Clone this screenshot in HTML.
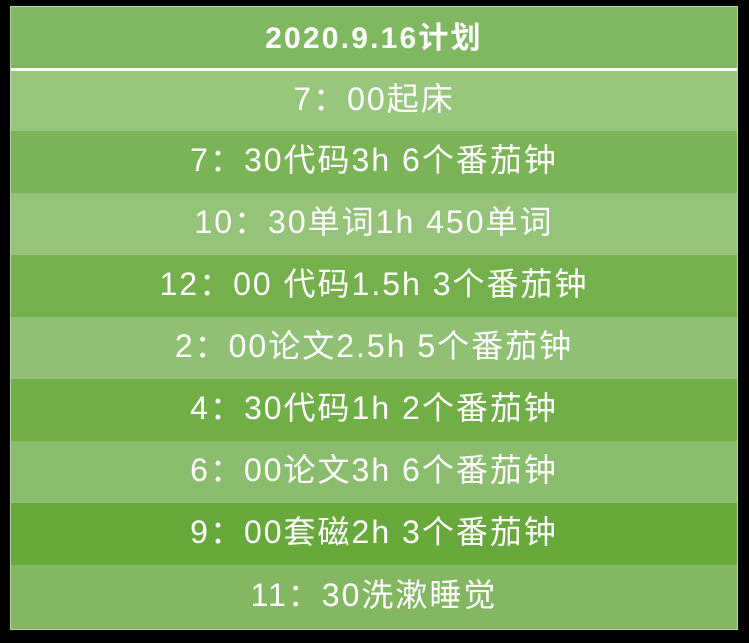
<!DOCTYPE html>
<html><head><meta charset="utf-8"><style>
html,body{margin:0;padding:0;background:#000;width:749px;height:643px;overflow:hidden}
.t{position:absolute;left:10px;top:6px;width:726px;height:622px;border:1px solid #b8d5a8;background:#80b761}
.r{position:absolute;left:0;width:726px;text-align:center;color:#fff;font-family:"Liberation Sans","Noto Sans CJK SC",sans-serif;font-size:32px;line-height:40px;letter-spacing:2px;display:flex;align-items:center;justify-content:center;box-sizing:border-box;padding-bottom:5px}
.h{top:0;height:61px;font-weight:bold;font-size:30px;letter-spacing:2.2px;background:#80b761;padding-bottom:0;padding-top:2px}
.line{position:absolute;left:0;top:61px;width:726px;height:3px;background:#fff}
</style></head><body>
<div class="t">
<div class="r h">2020.9.16计划</div>
<div class="line"></div>
<div class="r" style="top:64px;height:60px;background:#98c67c">7：00起床</div>
<div class="r" style="top:124px;height:62px;background:#7bb456">7：30代码3h 6个番茄钟</div>
<div class="r" style="top:186px;height:62px;background:#94c379">10：30单词1h 450单词</div>
<div class="r" style="top:248px;height:62px;background:#74b04b">12：00 代码1.5h 3个番茄钟</div>
<div class="r" style="top:310px;height:62px;background:#8fc073">2：00论文2.5h 5个番茄钟</div>
<div class="r" style="top:372px;height:62px;background:#70ae46">4：30代码1h 2个番茄钟</div>
<div class="r" style="top:434px;height:62px;background:#8abd6d">6：00论文3h 6个番茄钟</div>
<div class="r" style="top:496px;height:62px;background:#68a93c">9：00套磁2h 3个番茄钟</div>
<div class="r" style="top:558px;height:64px;background:#84b762">11：30洗漱睡觉</div>
</div>
</body></html>
